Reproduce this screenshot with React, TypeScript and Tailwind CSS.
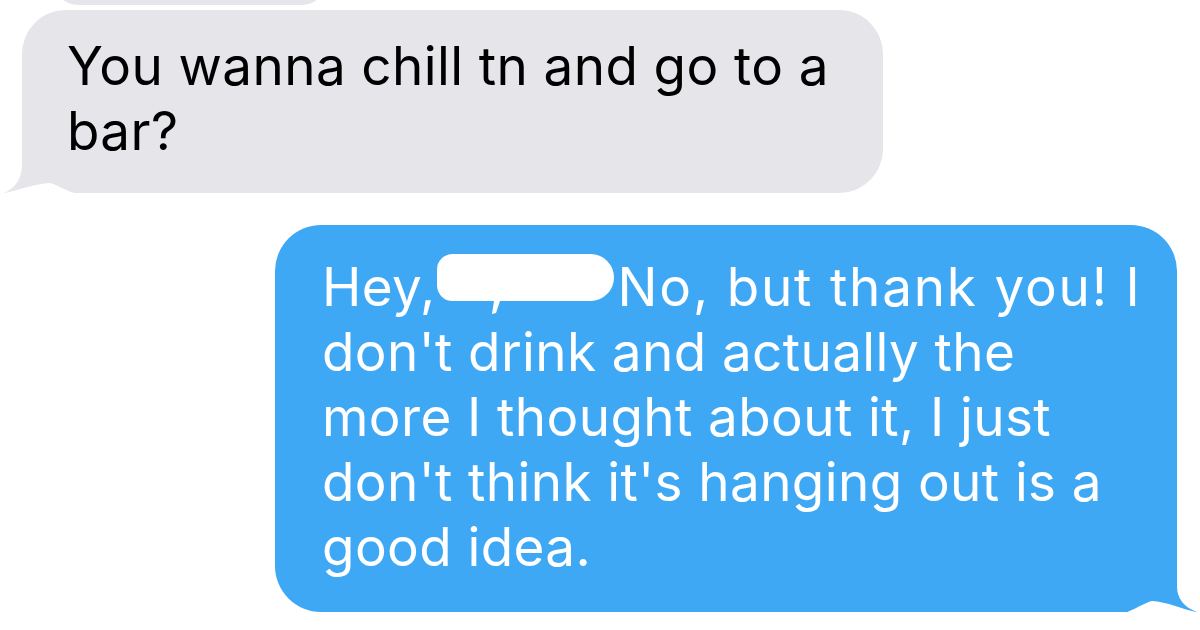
import React from "react";

const gray = "#e5e5ea";
const blue = "#3fa8f5";

export default function App() {
  return (
    <div className="w-[1200px] h-[630px] overflow-hidden bg-white flex flex-col font-['Inter','Liberation_Sans',sans-serif] text-[53px] leading-[65px] tracking-[0.4px]">
      {/* bottom of the previous bubble, cut off by the top edge */}
      <div className="ml-[55px] -mt-[40px] h-[45px] w-[270px] rounded-[40px] bg-[#e5e5ea]" />

      {/* incoming */}
      <div className="relative ml-[22px] mt-[5px] w-[861px] rounded-[44px] rounded-bl-none bg-[#e5e5ea] pl-[45px] pt-[24px] pb-[29px] text-black whitespace-nowrap">
        You wanna chill tn and go to a
        <br />
        bar?
        <svg className="absolute left-[-22px] bottom-0" width="80" height="60" viewBox="0 0 80 60">
          <path d="M22,0 L22,32 C22,46 15,55 4,60 L22,60 Z" fill={gray} />
          <path d="M2,60.5 C16,58 34,51 50,50 C58,52 64,57 76,60.5 Z" fill="#ffffff" />
        </svg>
      </div>

      {/* outgoing */}
      <div className="relative ml-[275px] mt-[32px] w-[902px] rounded-[46px] rounded-br-none bg-[#3fa8f5] pl-[47px] pt-[29px] pb-[32px] text-white whitespace-nowrap">
        Hey,
        <span className="relative inline-block align-baseline ml-[1px] mr-[4px] mb-[5px] h-[47px] w-[177px] rounded-l-[16px] rounded-r-[24px] bg-white">
          {/* bit of the hidden name peeking out below */}
          <svg className="absolute left-[54px] top-[47px]" width="10" height="14" viewBox="0 0 10 14">
            <path d="M3,0 L9,0 L5,12 L1,13 Z" fill="#ffffff" />
          </svg>
        </span>
        <span className="tracking-[1.8px]">No, but thank you! I</span>
        <br />
        don't drink and actually the
        <br />
        more I thought about it, I just
        <br />
        don't think it's hanging out is a
        <br />
        good idea.
        <svg className="absolute right-[-23px] bottom-0" width="100" height="62" viewBox="0 0 100 62">
          <path d="M77,0 L77,36 C77,49 84,57 97,62 L77,62 Z" fill={blue} />
          <path d="M99,62.5 C84,60 68,52 52,51 C44,53 38,58 26,62.5 Z" fill="#ffffff" />
        </svg>
      </div>
    </div>
  );
}
